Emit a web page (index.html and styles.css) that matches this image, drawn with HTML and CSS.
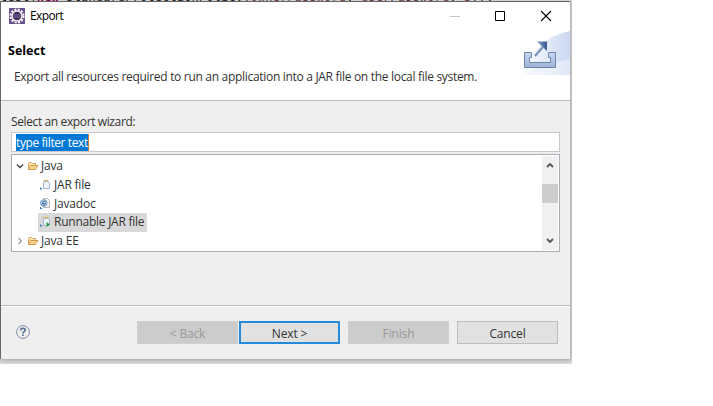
FILE: index.html
```html
<!DOCTYPE html>
<html lang="en">
<head>
<meta charset="utf-8">
<title>Export</title>
<link rel="stylesheet" href="styles.css">
</head>
<body>
<div class="desktop">
  <div class="code"><span class="line">test(<b>new</b> StandardProtectionPolicy(<i>ownerPassword</i>, <i>userPassword</i>, <i>p</i>));</span></div>
  <main class="dialog">
    <header class="titlebar">
      <svg class="app-icon" viewBox="0 0 16 16"><rect width="16" height="16" fill="#66518c"/><circle cx="8" cy="8" r="6.500" fill="none" stroke="#fff" stroke-width="2" stroke-dasharray="2 1.400"/><circle cx="8" cy="8" r="5" fill="#3b2c5c" stroke="#eee" stroke-width="1.500"/><path d="M4 7h8M4 9h8" stroke="#8d7fae" stroke-width=".8"/></svg>
      <span class="title">Export</span>
      <svg class="controls" viewBox="0 0 110 16" fill="none"><path d="M0 8.500h10" stroke="#c4c4c4"/><path d="M45.500 3.500h9v9h-9z" stroke="#000"/><path d="M91 3l10 10M101 3L91 13" stroke="#000" stroke-width="1.100"/></svg>
    </header>
    <section class="banner">
      <div class="banner-text">
        <h1>Select</h1>
        <p>Export all resources required to run an application into a JAR file on the local file system.</p>
      </div>
      <svg class="banner-art" viewBox="0 0 50 44">
        <defs>
          <linearGradient id="sweep"><stop offset="0" stop-color="#fff"/><stop offset="1" stop-color="#cbd8f2"/></linearGradient>
          <linearGradient id="tray" x2="0" y2="1"><stop offset="0" stop-color="#c8d8ef"/><stop offset="1" stop-color="#9db3d5"/></linearGradient>
          <linearGradient id="head" x2="1" y2="0"><stop offset="0" stop-color="#8ba2c8"/><stop offset="1" stop-color="#355690"/></linearGradient>
        </defs>
        <path d="M0 44Q16 6 50 0V44z" fill="url(#sweep)"/>
        <path d="M15 44Q25 34 50 28V44z" fill="#fff" opacity=".4"/>
        <path d="M4.500 21.500h7v5h-2v5h21v-5h-2v-5h7v15h-31z" fill="url(#tray)" stroke="#6b84b0"/>
        <path d="M15 25l8-9" stroke="#7890b8" stroke-width="2.200"/><path d="M17 10.500h10v9.500z" fill="url(#head)"/>
      </svg>
    </section>
    <section class="content">
      <label class="prompt">Select an export wizard:</label>
      <div class="filter"><span>type filter text</span></div>
      <div class="list">
        <div class="tree">
          <div class="row"><svg class="twist" viewBox="0 0 8 8"><path d="M1 2.500l3 3 3-3" fill="none" stroke="#444" stroke-width="1.400"/></svg><svg class="folder" viewBox="0 0 12 10"><path d="M1.500 8.500V2.500q0-1 1-1h2l1 1h3v2" fill="#ffe9b0" stroke="#d9a45c"/><path d="M1.500 8.500l2-4h7.500L8.500 8.500z" fill="#f8d48b" stroke="#d39a50"/></svg><span>Java</span></div>
          <div class="row child"><svg class="file" viewBox="0 0 12 12"><path d="M4.500 2.500h5l1 2v5h-6z" fill="#eef4fc" stroke="#a5b6d2"/><path d="M4.500 1.500h5" stroke="#dcbf6d" stroke-width="1.500"/><path d="M1 8v2.500h2.500z" fill="#2d71af"/></svg><span>JAR file</span></div>
          <div class="row child"><svg class="file" viewBox="0 0 12 12"><path d="M4.500 .5h4l2 2v7h-6z" fill="#f1f4fa" stroke="#b5b9b0"/><circle cx="4.800" cy="5" r="3.300" fill="#c3d9ee" stroke="#6d97be"/><path d="M3 5.500h4M6.500 3.500Q3 2.500 3.500 5.500T6.500 7" fill="none" stroke="#376b9b" stroke-width=".9"/><path d="M1 8.500v2.500h2.500z" fill="#2d71af"/></svg><span>Javadoc</span></div>
          <div class="row child selected"><svg class="file" viewBox="0 0 12 12"><path d="M4.500 2.500h5l1 2v5h-6z" fill="#eef4fc" stroke="#a5b6d2"/><path d="M4.500 1.500h5" stroke="#dcbf6d" stroke-width="1.500"/><path d="M1 8v2.500h2.500z" fill="#2d71af"/><path d="M7.500 6l3.500 2.500L7.500 11z" fill="#259e47"/></svg><span>Runnable JAR file</span></div>
          <div class="row"><svg class="twist" viewBox="0 0 8 8"><path d="M2.500 1l3 3-3 3" fill="none" stroke="#999" stroke-width="1.200"/></svg><svg class="folder" viewBox="0 0 12 10"><path d="M1.500 8.500V2.500q0-1 1-1h2l1 1h3v2" fill="#ffe9b0" stroke="#d9a45c"/><path d="M1.500 8.500l2-4h7.500L8.500 8.500z" fill="#f8d48b" stroke="#d39a50"/></svg><span>Java EE</span></div>
        </div>
        <div class="scrollbar"><svg viewBox="0 0 8 6"><path d="M1 5l3-3 3 3" fill="none" stroke="#555" stroke-width="1.800"/></svg><div class="thumb"></div><svg viewBox="0 0 8 6"><path d="M1 1l3 3 3-3" fill="none" stroke="#555" stroke-width="1.800"/></svg></div>
      </div>
    </section>
    <footer class="footer">
      <svg class="help" viewBox="0 0 14 14" fill="none"><circle cx="7" cy="7" r="6.400" stroke="#7e8dab"/><path d="M4.800 5.500V5q0-1.700 2.200-1.700T9.200 5q0 1-1.100 1.600T7 8.500M7 9.500v1.600" stroke="#51658f" stroke-width="1.600"/></svg>
      <button class="back" disabled>&lt; Back</button>
      <button class="next">Next &gt;</button>
      <button class="finish" disabled>Finish</button>
      <button class="cancel">Cancel</button>
    </footer>
  </main>
</div>
</body>
</html>
```
FILE: styles.css
```css
* { box-sizing: border-box; }
body { margin: 0; background: #fff; font: 12px/18px "Open Sans", "Noto Sans", sans-serif; color: #333; }
svg { display: block; flex: none; }
.desktop { width: 572px; height: 364px; background: #ddd; overflow: hidden; }
.code { height: 1px; overflow: hidden; background: #e8e8e8; font: 12px/14px "DejaVu Sans Mono", monospace; color: #222; }
.line { display: block; margin: -10px 0 0 0; white-space: pre; letter-spacing: .14px; }
.line b { color: #7f0055; }
.line i { color: #6a3e3e; font-style: normal; }
.dialog { width: 571px; height: 358px; background: #efefef; border: 1px solid #666; border-right-color: #bbb; border-bottom: 0; box-shadow: 0 1px 5px #999; }
.titlebar { height: 29px; display: flex; align-items: center; padding: 0 0 1px 8px; background: #fff; color: #000; }
.app-icon { width: 16px; height: 16px; }
.title { margin-left: 5px; letter-spacing: -.6px; }
.controls { width: 110px; height: 16px; margin: 0 10px 0 auto; }
.banner { height: 70px; display: flex; justify-content: space-between; background: #fff; border-bottom: 1px solid #bbb; }
.banner-text { padding: 11px 0 0 7px; }
h1 { margin: 0; font-size: 12.500px; line-height: 18px; color: #000; }
p { margin: 8px 0 0 6px; white-space: nowrap; letter-spacing: -.305px; }
.banner-art { width: 50px; height: 44px; }
.content { height: 204px; padding: 12px 10px 0; }
.prompt { display: block; height: 19px; letter-spacing: -.38px; }
.filter { height: 20px; border: 1px solid #c8c8c8; background: #fff; padding: 1px 4px; line-height: 17px; }
.filter span { display: inline-block; height: 17px; background: #0078d7; color: #fff; border-right: 1px solid #d07a30; letter-spacing: -.4px; }
.list { height: 98px; margin-top: 2px; border: 1px solid #a9adb5; background: #fff; display: flex; justify-content: space-between; padding: 1px; }
.tree { width: 300px; padding-top: 1px; }
.row { display: flex; align-items: center; height: 18.700px; padding-left: 3px; white-space: nowrap; letter-spacing: -.2px; }
.twist { width: 8px; height: 8px; margin-right: 3px; }
.folder { width: 12px; height: 10px; margin-right: 2px; }
.child { padding-left: 26px; }
.child span { padding: 0 3px 0 1px; }
.file { width: 12px; height: 12px; margin-right: 2px; }
.selected { margin-left: 25px; padding-left: 1px; width: 109px; background: #d9d9d9; }
.selected span { letter-spacing: -.25px; }
.scrollbar { width: 16px; background: #f0f0f0; display: flex; flex-direction: column; align-items: center; padding: 6px 0; }
.scrollbar svg { width: 8px; height: 6px; }
.scrollbar svg:last-child { margin-top: auto; }
.thumb { width: 16px; height: 19px; margin-top: 16px; background: #cdcdcd; }
.footer { height: 54px; border-top: 1px solid #bbb; display: flex; align-items: center; padding: 0 0 0 15px; box-shadow: inset 0 1px #fff; }
.help { width: 14px; height: 14px; margin-bottom: 2px; }
button { width: 101px; height: 23px; padding: 2px 0 0; border: 1px solid #bdbdbd; background: #e1e1e1; color: #333; font: inherit; letter-spacing: -.15px; }
button:disabled { background: #ccc; border-color: #d0d0d0; color: #999; }
.back { margin-left: 107px; }
.next { margin-left: 1px; border: 2px solid #268adb; }
.finish { margin-left: 8px; }
.cancel { margin-left: 8px; }
```
